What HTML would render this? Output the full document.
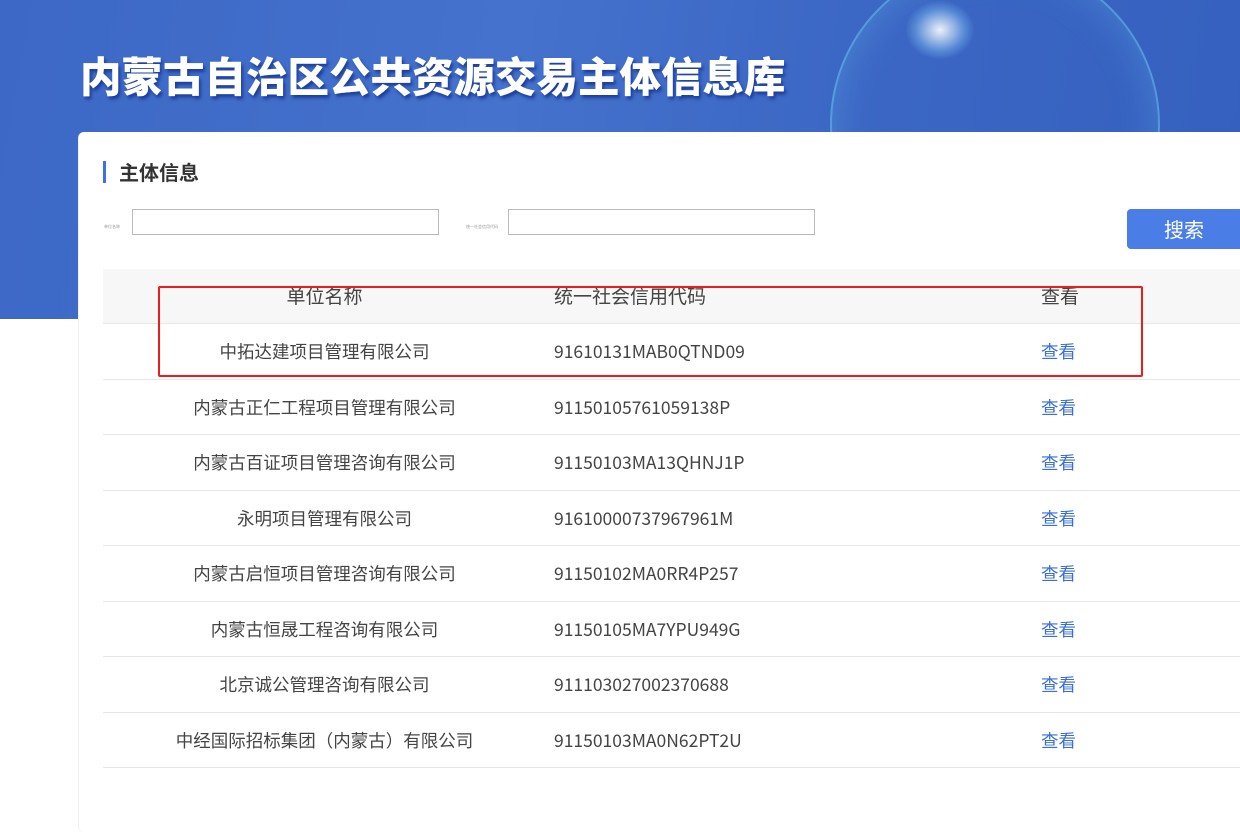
<!DOCTYPE html>
<html><head><meta charset="utf-8"><style>
*{margin:0;padding:0;box-sizing:border-box}
body{width:1240px;height:797px;overflow:hidden;background:#fff;font-family:"Noto Sans CJK SC","Liberation Sans",sans-serif;position:relative}
.banner{position:absolute;left:0;top:0;width:1240px;height:319px;background:linear-gradient(100deg,#3d68c6 0%,#4472cc 40%,#3b66c4 70%,#3560bf 100%)}
.glow{position:absolute;left:830px;top:-40px;width:330px;height:330px;border-radius:50%;border:2px solid rgba(120,220,255,.45);box-shadow:inset 0 0 40px rgba(120,220,255,.25)}
.spot{position:absolute;left:905px;top:0;width:70px;height:60px;border-radius:50%;background:radial-gradient(rgba(255,255,255,.9),rgba(150,220,255,.3) 50%,transparent 70%)}
h1{position:absolute;left:80px;top:44px;font-size:41.5px;line-height:60px;font-weight:900;color:#fff;text-shadow:2px 3px 3px #1c3e9a;font-family:"Noto Sans CJK SC",sans-serif;white-space:nowrap}
.card{position:absolute;left:78px;top:132px;width:1180px;height:700px;background:#fff;border-radius:6px;border-left:1px solid #eef0f4}
.title{position:absolute;left:103px;top:161px;border-left:3px solid #3c71e0;padding-left:13px;font-size:20px;font-weight:bold;color:#333;line-height:22px;height:22px}
.lbl{position:absolute;top:224px;font-size:4px;color:#999}
.inp{position:absolute;top:209px;width:307px;height:26px;border:1px solid #bbb}
.btn{position:absolute;left:1127px;top:209px;width:120px;height:40px;background:#4a7ee6;border-radius:4px;color:#fff;font-size:20px;line-height:40px;padding-left:37px}
.tbl{position:absolute;left:103px;top:269px;width:1140px}
.row{height:55.5px;border-bottom:1px solid #e6e6e6;position:relative;font-size:17.5px;color:#444;line-height:24px}
.row.h{background:#f7f7f7;height:55px;font-size:19px}
.c1{position:absolute;left:0;width:443px;text-align:center;top:16px}
.c2{position:absolute;left:451px;top:16px}
.c3{position:absolute;left:938px;top:16px;color:#3b6fd8}
.h .c1,.h .c2,.h .c3{top:15px;color:#444}
.red{position:absolute;left:158px;top:286px;width:985px;height:91px;border:2px solid #f01c1c;border-radius:2px}
</style></head><body>
<div class="banner"><div class="glow"></div><div class="spot"></div></div>
<h1>内蒙古自治区公共资源交易主体信息库</h1>
<div class="card"></div>
<div class="title">主体信息</div>
<div class="lbl" style="left:104px">单位名称</div>
<div class="inp" style="left:132px"></div>
<div class="lbl" style="left:466px">统一社会信用代码</div>
<div class="inp" style="left:508px"></div>
<div class="btn">搜索</div>
<div class="tbl">
<div class="row h"><div class="c1">单位名称</div><div class="c2">统一社会信用代码</div><div class="c3">查看</div></div>
<div class="row"><div class="c1">中拓达建项目管理有限公司</div><div class="c2">91610131MAB0QTND09</div><div class="c3">查看</div></div>
<div class="row"><div class="c1">内蒙古正仁工程项目管理有限公司</div><div class="c2">91150105761059138P</div><div class="c3">查看</div></div>
<div class="row"><div class="c1">内蒙古百证项目管理咨询有限公司</div><div class="c2">91150103MA13QHNJ1P</div><div class="c3">查看</div></div>
<div class="row"><div class="c1">永明项目管理有限公司</div><div class="c2">91610000737967961M</div><div class="c3">查看</div></div>
<div class="row"><div class="c1">内蒙古启恒项目管理咨询有限公司</div><div class="c2">91150102MA0RR4P257</div><div class="c3">查看</div></div>
<div class="row"><div class="c1">内蒙古恒晟工程咨询有限公司</div><div class="c2">91150105MA7YPU949G</div><div class="c3">查看</div></div>
<div class="row"><div class="c1">北京诚公管理咨询有限公司</div><div class="c2">911103027002370688</div><div class="c3">查看</div></div>
<div class="row"><div class="c1">中经国际招标集团（内蒙古）有限公司</div><div class="c2">91150103MA0N62PT2U</div><div class="c3">查看</div></div>
</div>
<div class="red"></div>
</body></html>
